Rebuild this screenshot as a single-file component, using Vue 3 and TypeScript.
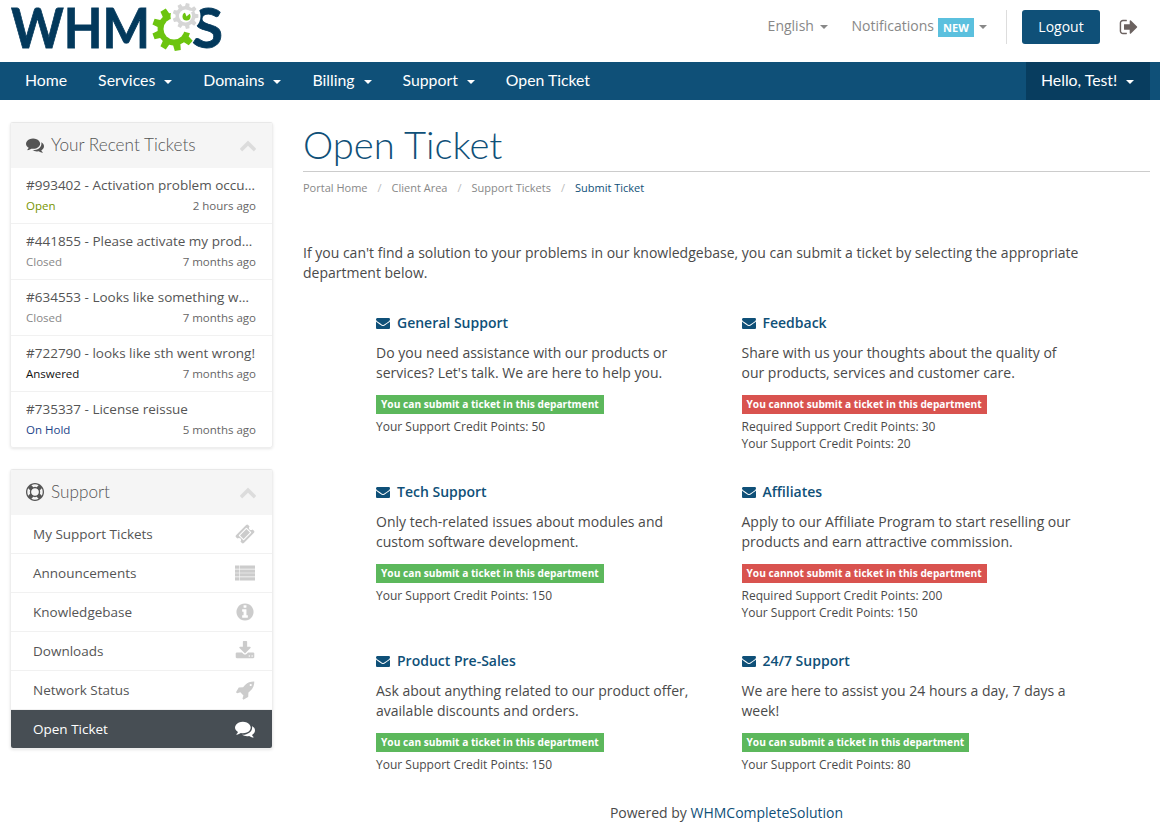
<script setup lang="ts">
const ICONS: Record<string, string> = {
  comments: 'M1408 768q0 139-94 257t-256.5 186.5-353.5 68.5q-86 0-176-16-124 88-278 128-36 9-86 16h-3q-11 0-20.5-8t-11.5-21q-1-3-1-6.5t.5-6.5 2-6l2.5-5 3.5-5.5 4-5 4.5-5 4-4.5q5-6 23-25t26-29.5 22.5-29 25-38.5 20.5-44q-124-72-195-177t-71-224q0-139 94-257t256.5-186.5 353.5-68.5 353.5 68.5 256.5 186.5 94 257zm384 256q0 120-71 224.5t-195 176.5q10 24 20.5 44t25 38.5 22.5 29 26 29.5 23 25q1 1 4 4.5t4.5 5 4 5 3.5 5.5l2.5 5 2 6 .5 6.5-1 6.5q-3 14-13 22t-22 7q-50-7-86-16-154-40-278-128-90 16-176 16-271 0-472-132 58 4 88 4 161 0 309-45t264-129q125-92 192-212t67-254q0-77-23-152 129 71 204 178t75 230z',
  envelope: 'M1792 710v794q0 66-47 113t-113 47h-1472q-66 0-113-47t-47-113v-794q44 49 101 87 362 246 497 345 57 42 92.5 65.5t94.5 48 110 24.5h2q51 0 110-24.5t94.5-48 92.5-65.5q170-123 498-345 57-39 100-87zm0-294q0 79-49 151t-122 123q-376 261-468 325-10 7-42.5 30.5t-54 38-52 32.5-57.5 27-50 9h-2q-23 0-50-9t-57.5-27-52-32.5-54-38-42.5-30.5q-91-64-262-182.5t-205-142.5q-62-42-117-115.5t-55-136.5q0-78 41.5-130t118.5-52h1472q65 0 112.5 47t47.5 113z',
  chevron: 'M1683 1331l-166 165q-19 19-45 19t-45-19l-531-531-531 531q-19 19-45 19t-45-19l-166-165q-19-19-19-45.5t19-45.5l742-741q19-19 45-19t45 19l742 741q19 19 19 45.5t-19 45.5z',
  info: 'M1152 1376v-160q0-14-9-23t-23-9h-96v-512q0-14-9-23t-23-9h-320q-14 0-23 9t-9 23v160q0 14 9 23t23 9h96v320h-96q-14 0-23 9t-9 23v160q0 14 9 23t23 9h448q14 0 23-9t9-23zm-128-896v-160q0-14-9-23t-23-9h-192q-14 0-23 9t-9 23v160q0 14 9 23t23 9h192q14 0 23-9t9-23zm640 416q0 209-103 385.5t-279.5 279.5-385.5 103-385.5-103-279.5-279.5-103-385.5 103-385.5 279.5-279.5 385.5-103 385.5 103 279.5 279.5 103 385.5z',
  download: 'M1344 1344q0-26-19-45t-45-19-45 19-19 45 19 45 45 19 45-19 19-45zm256 0q0-26-19-45t-45-19-45 19-19 45 19 45 45 19 45-19 19-45zm128-224v320q0 40-28 68t-68 28h-1472q-40 0-68-28t-28-68v-320q0-40 28-68t68-28h465l135 136q58 56 136 56t136-56l136-136h464q40 0 68 28t28 68zm-325-569q17 41-14 70l-448 448q-18 19-45 19t-45-19l-448-448q-31-29-14-70 17-39 59-39h256v-448q0-26 19-45t45-19h256q26 0 45 19t19 45v448h256q42 0 59 39z',
  list: 'M0 224h400v300H0zM448 224h1344v300H448zM0 572h400v300H0zM448 572h1344v300H448zM0 920h400v300H0zM448 920h1344v300H448zM0 1268h400v300H0zM448 1268h1344v300H448z',
  rocket: 'M1504 448q0-40-28-68t-68-28-68 28-28 68 28 68 68 28 68-28 28-68zm224-288q0 249-75.5 430.5t-253.5 360.5q-81 80-195 176l-20 379q-2 16-16 26l-384 224q-7 4-16 4-12 0-23-9l-64-64q-13-14-8-32l85-276-281-281-276 85q-3 1-9 1-14 0-23-9l-64-64q-17-19-5-39l224-384q10-14 26-16l379-20q96-114 176-195 188-187 358-258t431-71q14 0 24 9.5t10 22.5z',
  lifering: 'M896 0q182 0 348 71t286 191 191 286 71 348-71 348-191 286-286 191-348 71-348-71-286-191-191-286-71-348 71-348 191-286 286-191 348-71zm0 128q-190 0-361 90l194 194q82-28 167-28t167 28l194-194q-171-90-361-90zm-678 1129l194-194q-28-82-28-167t28-167l-194-194q-90 171-90 361t90 361zm678 407q190 0 361-90l-194-194q-82 28-167 28t-167-28l-194 194q171 90 361 90zm0-384q159 0 271.5-112.5t112.5-271.5-112.5-271.5-271.5-112.5-271.5 112.5-112.5 271.5 112.5 271.5 271.5 112.5zm484-217l194 194q90-171 90-361t-90-361l-194 194q28 82 28 167t-28 167z',
  signout: 'M704 1440q0 4 1 20t.5 26.5-3 23.5-10 19.5-20.5 6.5h-320q-119 0-203.5-84.5t-84.5-203.5v-704q0-119 84.5-203.5t203.5-84.5h320q13 0 22.5 9.5t9.5 22.5q0 4 1 20t.5 26.5-3 23.5-10 19.5-20.5 6.5h-320q-66 0-113 47t-47 113v704q0 66 47 113t113 47h312l11.5 1 11.5 3 8 5.5 7 9 2 13.5zm928-544q0 26-19 45l-544 544q-19 19-45 19t-45-19-19-45v-288h-448q-26 0-45-19t-19-45v-384q0-26 19-45t45-19h448v-288q0-26 19-45t45-19 45 19l544 544q19 19 19 45z',
  ticket: 'M1024 452l316 316-572 572-316-316zm-211 979l618-618q19-19 19-45t-19-45l-362-362q-18-18-45-18t-45 18l-618 618q-19 19-19 45t19 45l362 362q18 18 45 18t45-18zm889-637l-907 908q-37 37-90.5 37t-90.5-37l-126-126q56-56 56-136t-56-136-136-56-136 56l-125-126q-37-37-37-90.5t37-90.5l907-906q37-37 90.5-37t90.5 37l125 125q-56 56-56 136t56 136 136 56 136-56l126 125q37 37 37 90.5t-37 90.5z',
}

function gear(cx: number, cy: number, teeth: number, ro: number, ri: number): string {
  const pts: string[] = []
  const step = (Math.PI * 2) / teeth
  for (let i = 0; i < teeth; i++) {
    const a = i * step
    const seq: [number, number][] = [
      [a - step * 0.32, ri],
      [a - step * 0.2, ro],
      [a + step * 0.2, ro],
      [a + step * 0.32, ri],
    ]
    for (const [t, r] of seq) {
      pts.push(`${(cx + r * Math.cos(t)).toFixed(2)},${(cy + r * Math.sin(t)).toFixed(2)}`)
    }
  }
  return `M${pts.join('L')}Z`
}
const greenGear = gear(174, 29, 9, 22, 16.5)
const greyGear = gear(185.5, 16, 9, 13, 10)

const navItems = [
  { label: 'Home', caret: false },
  { label: 'Services', caret: true },
  { label: 'Domains', caret: true },
  { label: 'Billing', caret: true },
  { label: 'Support', caret: true },
  { label: 'Open Ticket', caret: false },
]

const tickets = [
  { title: '#993402 - Activation problem occurred here', status: 'Open', cls: 'open', time: '2 hours ago' },
  { title: '#441855 - Please activate my product now', status: 'Closed', cls: 'closed', time: '7 months ago' },
  { title: '#634553 - Looks like something went wrong', status: 'Closed', cls: 'closed', time: '7 months ago' },
  { title: '#722790 - looks like sth went wrong!', status: 'Answered', cls: 'answered', time: '7 months ago' },
  { title: '#735337 - License reissue', status: 'On Hold', cls: 'hold', time: '5 months ago' },
]

const supportLinks = [
  { label: 'My Support Tickets', icon: 'ticket', active: false },
  { label: 'Announcements', icon: 'list', active: false },
  { label: 'Knowledgebase', icon: 'info', active: false },
  { label: 'Downloads', icon: 'download', active: false },
  { label: 'Network Status', icon: 'rocket', active: false },
  { label: 'Open Ticket', icon: 'comments', active: true },
]

const crumbs = ['Portal Home', 'Client Area', 'Support Tickets']

const departments = [
  { name: 'General Support', desc: "Do you need assistance with our products or services? Let's talk. We are here to help you.", ok: true, required: 0, points: 50 },
  { name: 'Feedback', desc: 'Share with us your thoughts about the quality of our products, services and customer care.', ok: false, required: 30, points: 20 },
  { name: 'Tech Support', desc: 'Only tech-related issues about modules and custom software development.', ok: true, required: 0, points: 150 },
  { name: 'Affiliates', desc: 'Apply to our Affiliate Program to start reselling our products and earn attractive commission.', ok: false, required: 200, points: 150 },
  { name: 'Product Pre-Sales', desc: 'Ask about anything related to our product offer, available discounts and orders.', ok: true, required: 0, points: 150 },
  { name: '24/7 Support', desc: 'We are here to assist you 24 hours a day, 7 days a week!', ok: true, required: 0, points: 80 },
]
</script>

<template>
  <div class="page">
    <header class="top">
      <svg class="logo" width="216" height="52" viewBox="10 2 216 52">
        <text x="11" y="48" class="logo-text" textLength="139" lengthAdjust="spacingAndGlyphs">WHM</text>
        <path :d="greenGear" fill="#6cc40f" />
        <circle cx="174" cy="29" r="10.5" fill="#fff" />
        <path d="M174 29L204 14L204 37Z" fill="#fff" />
        <text x="192" y="48" class="logo-text" textLength="31" lengthAdjust="spacingAndGlyphs">S</text>
        <circle cx="185.5" cy="16" r="15" fill="#fff" />
        <path :d="greyGear" fill="#d6d6d6" />
        <circle cx="185.5" cy="16" r="6.5" fill="#fff" />
        <circle cx="186.5" cy="16.5" r="4" fill="#6cc40f" />
        <path d="M186.5 16.5L193 11L184 10Z" fill="#fff" />
      </svg>
      <div class="top-right">
        <a class="top-link lang">English <i class="caret grey"></i></a>
        <a class="top-link notif">Notifications <span class="new">NEW</span> <i class="caret grey"></i></a>
        <span class="divider"></span>
        <button class="logout">Logout</button>
        <svg class="signout" width="20" height="20" viewBox="0 0 1792 1792"><path :d="ICONS.signout" fill="#6b6260" /></svg>
      </div>
    </header>

    <nav class="nav">
      <ul class="nav-list">
        <li v-for="item in navItems" :key="item.label" class="nav-item">
          {{ item.label }}<i v-if="item.caret" class="caret white"></i>
        </li>
      </ul>
      <div class="hello">Hello, Test!<i class="caret white"></i></div>
    </nav>

    <div class="body">
      <aside class="side">
        <section class="panel">
          <h3 class="panel-head">
            <svg width="18" height="18" viewBox="0 0 1792 1792"><path :d="ICONS.comments" fill="#555" /></svg>
            <span>Your Recent Tickets</span>
            <svg class="chev" width="18" height="18" viewBox="0 0 1792 1792"><path :d="ICONS.chevron" fill="#dcdcdc" /></svg>
          </h3>
          <div v-for="t in tickets" :key="t.title" class="ticket">
            <div class="ticket-title">{{ t.title }}</div>
            <div class="ticket-meta">
              <span class="status" :class="t.cls">{{ t.status }}</span>
              <span class="time">{{ t.time }}</span>
            </div>
          </div>
        </section>

        <section class="panel">
          <h3 class="panel-head">
            <svg width="18" height="18" viewBox="0 0 1792 1792"><path :d="ICONS.lifering" fill="#555" /></svg>
            <span>Support</span>
            <svg class="chev" width="18" height="18" viewBox="0 0 1792 1792"><path :d="ICONS.chevron" fill="#dcdcdc" /></svg>
          </h3>
          <a v-for="l in supportLinks" :key="l.label" class="side-link" :class="{ active: l.active }">
            <span>{{ l.label }}</span>
            <svg width="20" height="20" viewBox="0 0 1792 1792"><path :d="ICONS[l.icon]" /></svg>
          </a>
        </section>
      </aside>

      <main class="main">
        <h1 class="title">Open Ticket</h1>
        <ol class="crumbs">
          <li v-for="c in crumbs" :key="c"><span>{{ c }}</span><b>/</b></li>
          <li class="current">Submit Ticket</li>
        </ol>
        <p class="intro">If you can't find a solution to your problems in our knowledgebase, you can submit a ticket by selecting the appropriate department below.</p>
        <div class="depts">
          <div v-for="d in departments" :key="d.name" class="dept">
            <div class="dept-name">
              <svg width="14" height="14" viewBox="0 0 1792 1792"><path :d="ICONS.envelope" fill="#0f5078" /></svg>
              <span>{{ d.name }}</span>
            </div>
            <p class="dept-desc">{{ d.desc }}</p>
            <span class="badge" :class="d.ok ? 'yes' : 'no'">{{ d.ok ? 'You can submit a ticket in this department' : 'You cannot submit a ticket in this department' }}</span>
            <div class="credits">
              <div v-if="d.required">Required Support Credit Points: {{ d.required }}</div>
              <div>Your Support Credit Points: {{ d.points }}</div>
            </div>
          </div>
        </div>
        <footer class="foot">Powered by <span>WHMCompleteSolution</span></footer>
      </main>
    </div>
  </div>
</template>

<style scoped>
.page {
  width: 1160px;
  height: 838px;
  overflow: hidden;
  background: #fff;
  font-family: "Open Sans", "Liberation Sans", sans-serif;
  font-size: 14px;
  color: #4a4a4a;
}
.top {
  height: 62px;
  display: flex;
  justify-content: space-between;
  padding: 0 10px;
  box-sizing: border-box;
}
.logo { margin-top: 2px; }
.logo-text {
  font-family: "Lato", sans-serif;
  font-weight: 700;
  font-size: 55px;
  fill: #03395c;
  stroke: #03395c;
  stroke-width: 0.8px;
}
.top-right {
  display: flex;
  align-items: flex-start;
  padding-top: 10px;
}
.top-link { color: #888; line-height: 32px; white-space: nowrap; }
.lang { margin-right: 24px; }
.new {
  display: inline-block;
  background: #5bc0de;
  color: #fff;
  font-size: 11px;
  font-weight: 700;
  line-height: 19px;
  padding: 0 5.5px;
  vertical-align: -1px;
}
.caret {
  display: inline-block;
  width: 0;
  height: 0;
  border-left: 4px solid transparent;
  border-right: 4px solid transparent;
  border-top: 4px solid;
  vertical-align: middle;
}
.caret.grey { color: #888; margin-left: 2px; }
.notif .caret.grey { margin-left: 1px; }
.caret.white { color: #fff; margin-left: 9px; }
.divider {
  width: 1px;
  height: 34px;
  background: #ddd;
  margin: 0 15px 0 19px;
}
.logout {
  width: 78px;
  height: 34px;
  background: #0f5078;
  border: 0;
  border-radius: 3px;
  color: #fff;
  font: 14px "Open Sans", sans-serif;
  padding: 0 0 2px;
}
.signout { margin: 7px 11px 0 19px; }
.nav {
  height: 38px;
  background: #0f5078;
  display: flex;
  justify-content: space-between;
  padding: 0 10px 0 9.5px;
  font-family: "Lato", sans-serif;
  font-size: 15.8px;
  color: #fff;
}
.nav-list {
  display: flex;
  list-style: none;
  margin: 0;
  padding: 0;
}
.nav-item { padding: 0 15.5px; line-height: 36px; }
.hello {
  width: 124px;
  box-sizing: border-box;
  padding-left: 15px;
  line-height: 36px;
  background: #083d5f;
}
.body {
  display: flex;
  padding: 22px 10px 0;
  gap: 30px;
}
.side { width: 263px; flex: none; }
.panel {
  border: 1px solid #eee;
  border-top-color: #e8e8e8;
  border-radius: 3px;
  box-shadow: 0 1px 3px rgba(0, 0, 0, 0.1);
  margin-bottom: 21px;
  overflow: hidden;
}
.panel-head {
  height: 45px;
  box-sizing: border-box;
  margin: 0;
  background: #f5f5f5;
  display: flex;
  align-items: center;
  padding: 0 15px 2px;
  font-family: "Lato", sans-serif;
  font-weight: 300;
  font-size: 17.2px;
  color: #555;
  gap: 7px;
}
.chev { margin-left: auto; }
.ticket {
  height: 56px;
  box-sizing: border-box;
  padding: 7px 16px 0 15px;
  border-bottom: 1px solid #f1f1f1;
}
.ticket:last-child { height: 55px; border-bottom: 0; }
.ticket-title {
  font-size: 13.5px;
  line-height: 20px;
  color: #555;
  white-space: nowrap;
  overflow: hidden;
  text-overflow: ellipsis;
}
.ticket-meta {
  display: flex;
  justify-content: space-between;
  font-size: 11.5px;
  line-height: 21px;
}
.time { color: #666; }
.status.open { color: #779500; }
.status.closed { color: #888; }
.status.answered { color: #111; }
.status.hold { color: #224488; }
.side-link {
  height: 39px;
  box-sizing: border-box;
  display: flex;
  align-items: center;
  justify-content: space-between;
  padding: 0 17px 0 22px;
  border-bottom: 1px solid #f1f1f1;
  font-size: 13.5px;
  color: #555;
  fill: #ccc;
}
.side-link.active {
  height: 38px;
  background: #474e54;
  border-bottom: 0;
  color: #fff;
  fill: #fff;
}
.main { flex: 1; min-width: 0; }
.title {
  margin: 0;
  height: 49px;
  border-bottom: 1px solid #ccc;
  font-family: "Lato", sans-serif;
  font-weight: 300;
  font-size: 38.2px;
  line-height: 45px;
  color: #0f5078;
}
.crumbs {
  display: flex;
  list-style: none;
  margin: 0;
  padding: 8px 0 0;
  font-size: 11px;
  line-height: 15px;
  color: #888;
}
.crumbs b { font-weight: 400; color: #bbb; margin: 0 10px; }
.crumbs .current { color: #0f5078; }
.intro {
  margin: 48px 0 0;
  line-height: 20px;
  color: #4a4a4a;
}
.depts {
  display: grid;
  grid-template-columns: 365.5px 365.5px;
  grid-template-rows: 169px 169px 130px;
  margin: 30px 0 0 73px;
}
.dept { padding-right: 30px; }
.dept-name {
  display: flex;
  align-items: center;
  gap: 7px;
  font-weight: 600;
  line-height: 20px;
  color: #0f5078;
}
.dept-desc { margin: 10px 0 12px; line-height: 20px; }
.badge {
  display: block;
  width: fit-content;
  padding: 0 5px;
  color: #fff;
  font-size: 10.2px;
  font-weight: 700;
  line-height: 19px;
  white-space: nowrap;
}
.badge.yes { background: #5cb85c; }
.badge.no { background: #d9534f; }
.credits { margin-top: 4px; font-size: 12px; line-height: 17px; }
.foot {
  margin-top: 22px;
  text-align: center;
  line-height: 20px;
}
.foot span { color: #0f5078; }
</style>

<style>
html, body { margin: 0; background: #fff; }
</style>
